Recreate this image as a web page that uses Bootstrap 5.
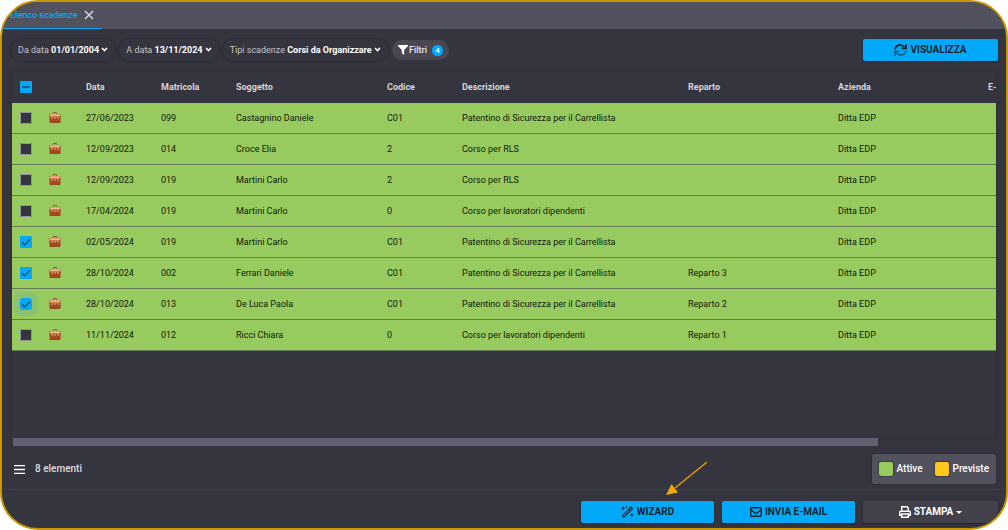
<!DOCTYPE html>
<html lang="it">
<head>
<meta charset="utf-8">
<meta name="viewport" content="width=device-width, initial-scale=1">
<title>Elenco scadenze</title>
<link href="https://cdn.jsdelivr.net/npm/bootstrap@5.3.0/dist/css/bootstrap.min.css" rel="stylesheet">
<style>
:root{--gold:#c99700;--base:#35353f;--panel:#52515e;--accent:#03a9f9;--green:#98cb5f}
body{background:#fff;font-family:Roboto,"Liberation Sans",sans-serif;font-size:9px;line-height:14px;color:#dedee0}
.frame{min-height:100vh;background:var(--base);border:2px solid var(--gold);border-radius:38px}
.tabbar{background:var(--panel);height:27px}
.tab-item{border-bottom:1px solid var(--accent);padding-left:8px;width:100px;gap:6px}
.tab-item a{color:var(--accent);font-weight:500}
.bare{background:none;border:0;padding:0;color:inherit;line-height:0}
.top-row{padding:10px 8px 0 9px}
.chips{gap:4px}
.chip{height:22px;border:0;border-radius:11px;background:var(--base);box-shadow:0 0 3px #26262e;color:#c4c4c8;padding:0 7px;font-size:9px}
.chip b{font-weight:700;color:#fff}
.chip svg{vertical-align:1px}
.chip-fill{background:#484753;color:#e8e8ea;box-shadow:none;font-weight:500;height:20px;padding:0 6px;gap:1px}
.count{width:11px;height:11px;border-radius:50%;background:var(--accent);color:#fff;font-size:8px;line-height:11px}
.act{height:22px;width:133px;border:0;border-radius:2px;padding:0;background:var(--accent);color:#10242f;font-size:10px;line-height:14px;font-weight:700;box-shadow:0 1px 2px #22222a;gap:3px}
.act:hover{background:#30b9fa}
.act-wide{width:135px}
.act-dark,.act-dark:hover{background:#42414c;color:#fff}
.list-area{padding:10px 10px 0}
.grid-wrap{box-shadow:0 0 2px #2c2c34}
.grid{table-layout:fixed;border-collapse:separate;border-spacing:0;color:#10190a}
.grid th{height:32px;padding:0;color:#d6d6da;font-weight:700;white-space:nowrap;vertical-align:middle}
.grid td{height:31px;padding:0;background:var(--green);border-bottom:1px solid #667a55;white-space:nowrap;vertical-align:middle}
.grid th:first-child,.grid td:first-child{padding-left:8px}
.grid .form-check-input{width:12px;height:12px;margin:0;border:0;border-radius:1px;background-color:var(--base);display:block;box-shadow:inset 0 0 0 1px #93929f;background-size:12px}
.grid .form-check-input:checked,.grid .form-check-input:indeterminate{background-color:var(--accent);box-shadow:none}
.grid .form-check-input:checked{background-image:url("data:image/svg+xml,%3csvg xmlns='http://www.w3.org/2000/svg' viewBox='0 0 12 12'%3e%3cpath d='M2 6.200l2.600 2.600L10 3.400' fill='none' stroke='%2316435c' stroke-width='1.200'/%3e%3c/svg%3e")}
.grid .form-check-input:indeterminate{background-image:url("data:image/svg+xml,%3csvg xmlns='http://www.w3.org/2000/svg' viewBox='0 0 12 12'%3e%3cpath d='M2 6h8' stroke='%2316435c' stroke-width='1.400'/%3e%3c/svg%3e")}
.grid .form-check-input.halo{box-shadow:0 0 0 6px #8ac272;border-radius:3px}
.c-check{width:37px}.c-icon{width:37px}.c-s{width:75px}.c-name{width:151px}.c-m{width:150px}.c-l{width:226px}
.bag{margin-bottom:2px}
.track{height:8px;margin-left:1px}
.thumb{width:88%;background:#636171}
.status{padding:8px 10px 5px;font-size:10px}
.legend-box{background:var(--panel);border-radius:2px;height:30px;box-shadow:0 0 2px #22222a;color:#fff;font-weight:500;padding:0 7px}
.swatch{width:14px;height:14px;border-radius:2px;box-shadow:0 0 1px 1px #3d3c45}
.swatch-on{background:var(--green)}.swatch-next{background:#ffc61c}
.rule{height:1px;background:#42414b}
.foot{height:38px;padding:11px 8px 0 0;gap:8px}
.pointer{left:664px;top:459px}
</style>
</head>
<body>
<div class="frame d-flex flex-column overflow-hidden position-relative">
  <nav class="tabbar d-flex">
    <div class="tab-item d-flex align-items-center">
      <a href="#" class="text-decoration-none text-nowrap">Elenco scadenze</a>
      <button class="bare" aria-label="Chiudi"><svg width="10" height="10" viewBox="0 0 10 10"><path d="M1 1l8 8M9 1L1 9" stroke="#dcdce0" stroke-width="1.400"/></svg></button>
    </div>
  </nav>

  <header class="top-row d-flex align-items-center">
    <div class="chips d-flex align-items-center text-nowrap">
      <button class="chip">Da data <b>01/01/2004</b> <svg width="7" height="5" viewBox="0 0 7 5"><path d="M1 1l2.500 2.500L6 1" fill="none" stroke="#fff" stroke-width="1.600"/></svg></button>
      <button class="chip">A data <b>13/11/2024</b> <svg width="7" height="5" viewBox="0 0 7 5"><path d="M1 1l2.500 2.500L6 1" fill="none" stroke="#fff" stroke-width="1.600"/></svg></button>
      <button class="chip">Tipi scadenze <b>Corsi da Organizzare</b> <svg width="7" height="5" viewBox="0 0 7 5"><path d="M1 1l2.500 2.500L6 1" fill="none" stroke="#fff" stroke-width="1.600"/></svg></button>
      <button class="chip chip-fill d-flex align-items-center"><svg width="10" height="10" viewBox="0 0 10 10"><path d="M0 0h10v1L6.200 5v5L3.800 8.200V5L0 1z" fill="#fff"/></svg>Filtri<span class="count ms-1">4</span></button>
    </div>
    <button class="btn act act-wide ms-auto d-flex align-items-center justify-content-center">
      <svg width="13" height="12" viewBox="0 0 13 12" fill="none" stroke-width="1.700"><path d="M1 5.500A5.200 5 0 0 1 10.500 3.300M12 .3v4.200H7.500" stroke="#10242f"/><path d="M12 6.500A5.200 5 0 0 1 2.500 8.700M1 11.700V7.500h4.500" stroke="#0c6187"/></svg>VISUALIZZA</button>
  </header>

  <main class="list-area flex-grow-1 d-flex flex-column">
    <div class="grid-wrap flex-grow-1 overflow-hidden">
      <table class="grid w-100">
        <colgroup><col class="c-check"><col class="c-icon"><col class="c-s"><col class="c-s"><col class="c-name"><col class="c-s"><col class="c-l"><col class="c-m"><col class="c-m"><col></colgroup>
        <thead><tr><th><input type="checkbox" class="form-check-input" id="all" aria-label="Seleziona tutto"></th><th></th><th>Data</th><th>Matricola</th><th>Soggetto</th><th>Codice</th><th>Descrizione</th><th>Reparto</th><th>Azienda</th><th>E-</th></tr></thead>
        <tbody id="rows"></tbody>
      </table>
    </div>
    <div class="track d-flex"><div class="thumb"></div></div>
  </main>

  <section class="status d-flex align-items-center">
    <button class="bare" aria-label="Menu"><svg width="15" height="9" viewBox="0 0 15 9"><path d="M2 .7h11M2 4.500h11M2 8.300h11" stroke="#fff" stroke-width="1.300"/></svg></button>
    <span class="fw-medium ms-2">8 elementi</span>
    <div class="legend-box ms-auto d-flex align-items-center">
      <span class="swatch swatch-on me-1"></span><span class="me-2 pe-1">Attive</span>
      <span class="swatch swatch-next me-1"></span><span>Previste</span>
    </div>
  </section>
  <div class="rule mx-2"></div>
  <footer class="foot d-flex justify-content-end">
    <button class="btn act d-flex align-items-center justify-content-center">
      <svg width="13" height="12" viewBox="0 0 13 12" fill="none" stroke="#10242f" stroke-width="1.200"><path d="M1.300 9.800L9.900 1.200l1.500 1.500L2.800 11.300zM7.800 3.300l1.500 1.500M2.200.8v3M.7 2.300h3M5.500 0v1.800M10.800 7.500v3M9.300 9h3"/></svg>WIZARD</button>
    <button class="btn act d-flex align-items-center justify-content-center">
      <svg width="12" height="10" viewBox="0 0 12 10" fill="none" stroke="#10242f" stroke-width="1.400"><rect x=".7" y=".7" width="10.600" height="8.600" rx="1"/><path d="M1 3l5 3.700L11 3"/></svg>INVIA E-MAIL</button>
    <button class="btn act act-wide act-dark d-flex align-items-center justify-content-center">
      <svg width="12" height="12" viewBox="0 0 12 12" fill="none" stroke="#fff" stroke-width="1.500"><path d="M2.700 5V.7h5.300l1.300 1.300V5M2.700 9.300H.7V6.500Q.7 5.200 2 5.200h8q1.300 0 1.300 1.300v2.800h-2M2.700 8h6.600v3.300H2.700z"/></svg>STAMPA
      <svg width="6" height="3" viewBox="0 0 6 3"><path d="M0 0h6L3 3z" fill="#fff"/></svg></button>
  </footer>
  <svg class="pointer position-absolute" width="44" height="36" viewBox="0 0 44 36"><path d="M41 1L9 27" stroke="#e9a007" stroke-width="1.400"/><path d="M0 34L5.500 23 12 31.500z" fill="#efa50a"/></svg>
</div>
<template id="bag"><svg class="bag d-block" width="12" height="11" viewBox="0 0 12 11"><path d="M4 2.500V1.500Q4 .6 5 .6h2q1 0 1 .9v1" fill="none" stroke="#85562c" stroke-width="1"/><rect x=".5" y="2" width="11" height="8.800" rx="1" fill="#a8481f"/><path d="M1.300 2.300h9.400l.5 2.200H.8z" fill="#f0be94"/><path d="M.8 4.500h10.400v.9Q6 7.200.8 5.400z" fill="#c9713f"/><path d="M.6 5.500q5.400 2 10.800 0" fill="none" stroke="#7a3216" stroke-width=".8"/><path d="M2.500 5h1v2h-1zM8.500 5h1v2h-1zM5.500 5.500h1V7h-1z" fill="#f0bd80"/><path d="M.8 10.400h10.400" stroke="#75341c" stroke-width=".6"/></svg></template>
<script src="https://cdn.jsdelivr.net/npm/bootstrap@5.3.0/dist/js/bootstrap.bundle.min.js"></script>
<script>
const P = "Patentino di Sicurezza per il Carrellista", L = "Corso per lavoratori dipendenti", R = "Corso per RLS";
const data = [
  [0,"27/06/2023","099","Castagnino Daniele","C01",P,""],
  [0,"12/09/2023","014","Croce Elia","2",R,""],
  [0,"12/09/2023","019","Martini Carlo","2",R,""],
  [0,"17/04/2024","019","Martini Carlo","0",L,""],
  [1,"02/05/2024","019","Martini Carlo","C01",P,""],
  [1,"28/10/2024","002","Ferrari Daniele","C01",P,"Reparto 3"],
  [2,"28/10/2024","013","De Luca Paola","C01",P,"Reparto 2"],
  [0,"11/11/2024","012","Ricci Chiara","0",L,"Reparto 1"]];
const bag = document.getElementById("bag").innerHTML;
document.getElementById("rows").innerHTML = data.map(([s, ...c]) =>
  `<tr><td><input type="checkbox" class="form-check-input${s === 2 ? " halo" : ""}" aria-label="Seleziona ${c[2]}"${s ? " checked" : ""}></td><td>${bag}</td>${c.map(t => `<td>${t}</td>`).join("")}<td>Ditta EDP</td><td></td></tr>`).join("");
document.getElementById("all").indeterminate = true;
</script>
</body>
</html>
